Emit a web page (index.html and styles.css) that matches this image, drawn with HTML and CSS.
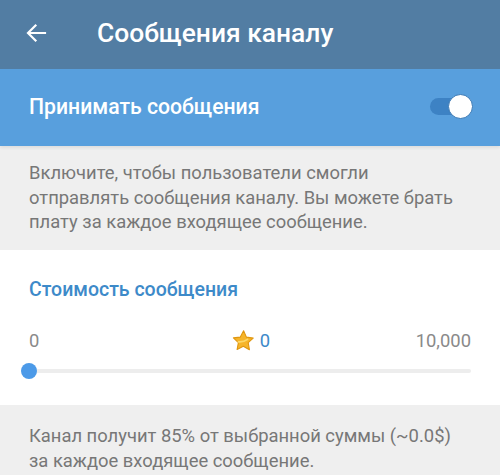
FILE: index.html
```
<!DOCTYPE html>
<html lang="ru">
<head>
<meta charset="utf-8">
<link rel="stylesheet" href="styles.css">
</head>
<body>
<header class="bar">
  <svg class="back" width="24" height="24" viewBox="0 0 24 24"><path d="M21 12H4.5M11.5 4.5 4 12l7.5 7.5" fill="none" stroke="#fff" stroke-width="2.2" stroke-linecap="square"/></svg>
  <h1 class="title">Сообщения каналу</h1>
</header>
<section class="switch-row">
  <span class="switch-label">Принимать сообщения</span>
  <span class="toggle"><span class="knob"></span></span>
</section>
<section class="info">
  <p>Включите, чтобы пользователи смогли отправлять сообщения каналу. Вы можете брать плату за каждое входящее сообщение.</p>
</section>
<section class="price">
  <h2 class="price-title">Стоимость сообщения</h2>
  <div class="scale">
    <span class="min">0</span>
    <span class="current"><svg width="24" height="24" viewBox="0 0 24 24"><path d="M12.6 1.8l2.8 6.3 6.8 1-5 4.6 1.2 7-6.1-3.4-6.2 3.2 1.3-6.9L2.4 8.9l6.9-.8z" fill="#f6b52a" stroke="#e0960f" stroke-width="1.1" stroke-linejoin="round"/><path d="M7.5 12.8c3.2.3 6.2-.3 9-2.4" fill="none" stroke="#fcd969" stroke-width="1.8" stroke-linecap="round"/></svg>0</span>
    <span class="max">10,000</span>
  </div>
  <div class="track"><span class="thumb"></span></div>
</section>
<section class="info info-bottom">
  <p>Канал получит 85% от выбранной суммы (~0.0$) за каждое входящее сообщение.</p>
</section>
</body>
</html>
```
FILE: styles.css
```
* { box-sizing: border-box; }
html, body { margin: 0; padding: 0; }
body {
  width: 500px;
  height: 475px;
  overflow: hidden;
  font-family: Roboto, "Noto Sans", sans-serif;
  background: #efefef;
}
.bar {
  height: 69px;
  background: #527da3;
  display: flex;
  align-items: center;
  padding-left: 24px;
  padding-bottom: 3px;
}
.back { flex: none; }
.title {
  margin: 0 0 0 49px;
  color: #fff;
  font-size: 26.4px;
  font-weight: 500;
}
.switch-row {
  height: 77px;
  background: #589fdd;
  display: flex;
  align-items: center;
  justify-content: space-between;
  padding: 0 30px 2px 29px;
  box-shadow: 0 2px 3px rgba(0,0,0,0.07);
}
.switch-label {
  color: #fff;
  font-size: 21.2px;
  font-weight: 500;
}
.toggle {
  position: relative;
  width: 40px;
  height: 17px;
  border-radius: 9px;
  background: #3d82c4;
}
.knob {
  position: absolute;
  right: -3px;
  top: -4px;
  width: 25px;
  height: 25px;
  border-radius: 50%;
  background: #fff;
  border: 1.5px solid #3a79b5;
}
.info {
  padding: 15px 40px 15px 29px;
  color: #777;
  font-size: 18.4px;
  line-height: 24.5px;
}
.info p { margin: 0; }
.price {
  background: #fff;
  padding: 27px 29px 32px;
}
.price-title {
  margin: 0;
  color: #3d8ac9;
  font-size: 19.5px;
  font-weight: 500;
  line-height: 26px;
}
.scale {
  display: flex;
  justify-content: space-between;
  align-items: center;
  margin-top: 26px;
  color: #8a8a8a;
  font-size: 18.4px;
  line-height: 24px;
}
.current {
  display: flex;
  align-items: center;
  gap: 5px;
  color: #3d8ac9;
  margin-left: 46px;
}
.track {
  position: relative;
  margin-top: 16px;
  height: 4px;
  border-radius: 2px;
  background: #ededed;
}
.thumb {
  position: absolute;
  left: -8px;
  top: -6px;
  width: 16px;
  height: 16px;
  border-radius: 50%;
  background: #4c9ae8;
}
.info-bottom { padding-top: 18px; line-height: 25px; }
```
